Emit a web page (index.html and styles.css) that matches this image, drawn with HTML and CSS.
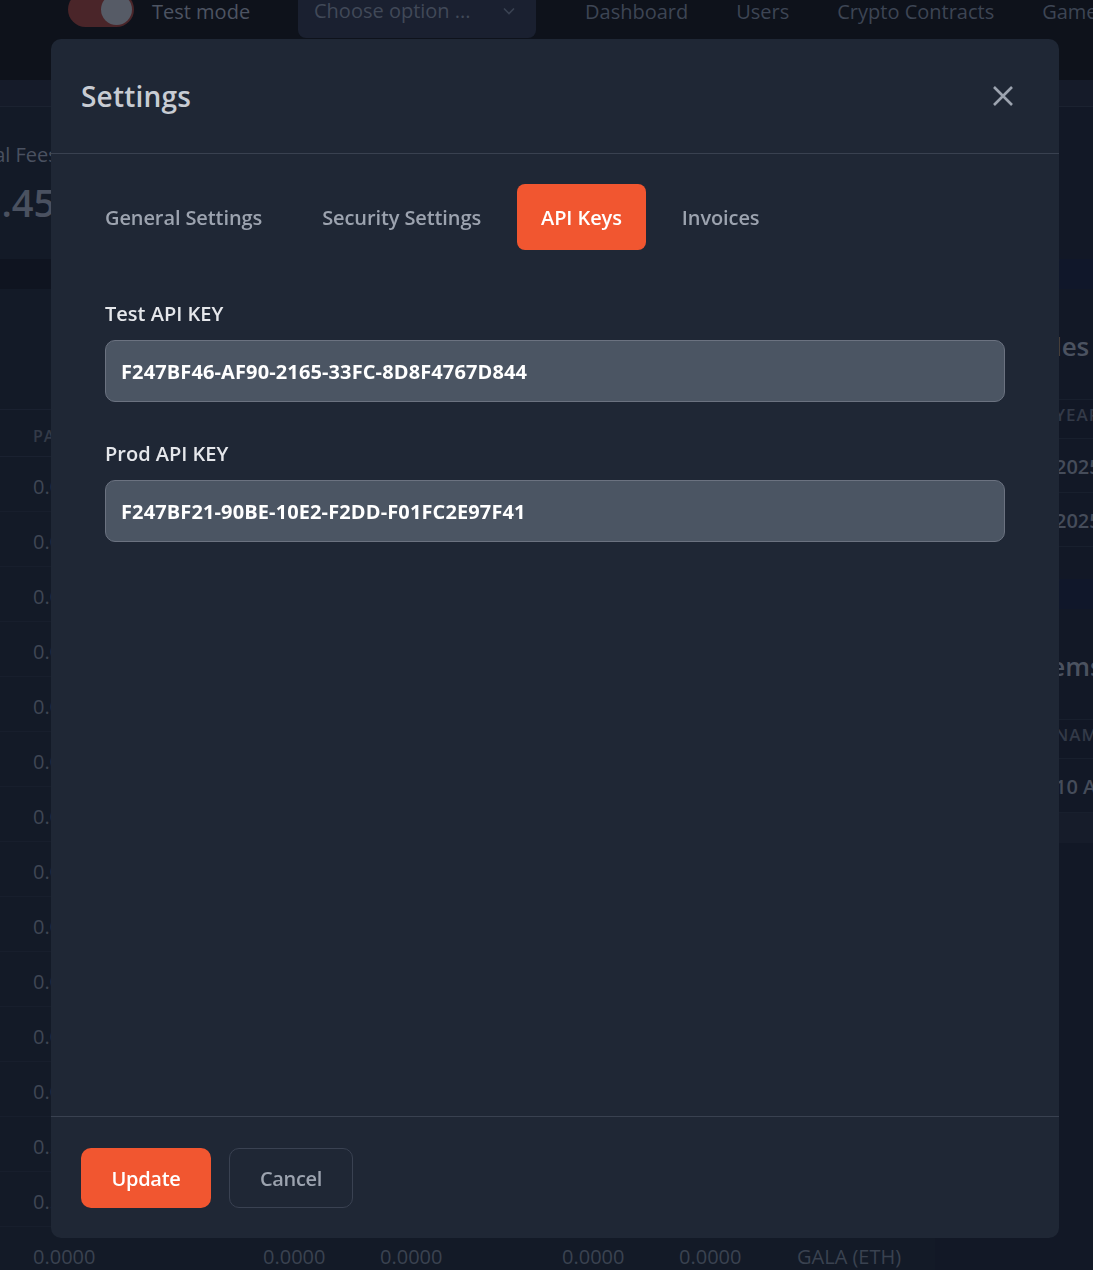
FILE: index.html
```html
<!DOCTYPE html>
<html lang="en">
<head>
<meta charset="utf-8">
<title>Settings</title>
<link rel="stylesheet" href="styles.css">
</head>
<body>
<div class="page">
  <header class="nav">
    <div class="nav-left">
      <span class="toggle"><span class="knob"></span></span>
      <span class="nav-text">Test mode</span>
      <div class="select">
        <span>Choose option ...</span>
        <svg width="14" height="14" viewBox="0 0 14 14"><path d="M2 4.5 7 9.5 12 4.5" fill="none" stroke="#3a4252" stroke-width="1.6"/></svg>
      </div>
    </div>
    <nav class="links">
      <span>Dashboard</span><span>Users</span><span>Crypto Contracts</span><span>Games</span>
    </nav>
  </header>
  <div class="subbar"></div>
  <main class="main">
    <section class="left">
      <div class="stats">
        <div class="stat-label">Total Fees</div>
        <div class="stat-value">$5.45</div>
      </div>
      <div class="band"></div>
      <div class="table">
        <div class="thead">PAIR</div>
        <div class="row">0.0000</div><div class="row">0.0000</div><div class="row">0.0000</div>
        <div class="row">0.0000</div><div class="row">0.0000</div><div class="row">0.0000</div>
        <div class="row">0.0000</div><div class="row">0.0000</div><div class="row">0.0000</div>
        <div class="row">0.0000</div><div class="row">0.0000</div><div class="row">0.0000</div>
        <div class="row">0.5000</div><div class="row">0.5000</div>
        <div class="row last">
          <span class="c1">0.0000</span><span class="c2">0.0000</span><span class="c3">0.0000</span>
          <span class="c4">0.0000</span><span class="c5">0.0000</span><span class="c6">GALA (ETH)</span>
        </div>
      </div>
    </section>
    <aside class="right">
      <div class="banner"></div>
      <div class="card-title t1">Sales</div>
      <div class="r-head">YEAR</div>
      <div class="r-row">2025</div>
      <div class="r-row">2025</div>
      <div class="banner b2"></div>
      <div class="card-title t2">Items</div>
      <div class="r-head">NAME</div>
      <div class="r-row">10 AXS</div>
      <div class="r-band"></div>
    </aside>
  </main>
</div>

<div class="backdrop">
  <div class="modal">
    <div class="modal-header">
      <h2>Settings</h2>
      <button class="close" aria-label="Close">
        <svg width="22" height="22" viewBox="0 0 22 22"><path d="M2 2 20 20M20 2 2 20" stroke="#9ca3af" stroke-width="2.6" stroke-linecap="butt"/></svg>
      </button>
    </div>
    <div class="modal-body">
      <div class="tabs">
        <button class="tab">General Settings</button>
        <button class="tab">Security Settings</button>
        <button class="tab active">API Keys</button>
        <button class="tab">Invoices</button>
      </div>
      <div class="form">
        <label class="field">
          <span class="label">Test API KEY</span>
          <input class="input" type="text" value="F247BF46-AF90-2165-33FC-8D8F4767D844" readonly>
        </label>
        <label class="field">
          <span class="label">Prod API KEY</span>
          <input class="input" type="text" value="F247BF21-90BE-10E2-F2DD-F01FC2E97F41" readonly>
        </label>
      </div>
    </div>
    <div class="modal-footer">
      <button class="btn primary">Update</button>
      <button class="btn ghost">Cancel</button>
    </div>
  </div>
</div>
</body>
</html>
```

FILE: styles.css
```css
* { box-sizing: border-box; }
html, body { margin: 0; padding: 0; }
body {
  width: 1093px;
  height: 1270px;
  overflow: hidden;
  background: #131926;
  font-family: "Open Sans", "Noto Sans", sans-serif;
  color: #e5e7eb;
}
button, input { font-family: inherit; }

/* ---------- background page (dimmed) ---------- */
.page { width: 1093px; }
.nav {
  height: 80px;
  background: #0e121b;
  display: flex;
  align-items: flex-start;
  padding-left: 68px;
  white-space: nowrap;
}
.nav-left { display: flex; align-items: flex-start; }
.toggle {
  margin-top: -8px;
  width: 66px;
  height: 35px;
  border-radius: 18px;
  background: #4a2529;
  display: flex;
  justify-content: flex-end;
  align-items: center;
  padding-right: 2px;
}
.knob { width: 31px; height: 31px; border-radius: 50%; background: #565b66; }
.nav-text { margin-left: 18px; width: 98px; font-size: 20px; color: #4d5462; line-height: 24px; }
.select {
  margin-left: 48px;
  margin-top: -4px;
  width: 238px;
  height: 42px;
  background: #1a2030;
  border-radius: 0 0 8px 8px;
  display: flex;
  align-items: flex-start;
  justify-content: space-between;
  padding: 2px 20px 0 16px;
  font-size: 20px;
  color: #414958;
  line-height: 26px;
}
.select svg { margin-top: 6px; }
.links {
  display: flex;
  gap: 48px;
  margin-left: 49px;
  font-size: 20px;
  color: #3d4554;
  line-height: 24px;
}
.subbar { height: 27px; background: #151b29; border-bottom: 1px solid #1b2230; }
.main { display: grid; grid-template-columns: 935px 1fr; }
.left { background: #131a27; }
.stats { padding: 34px 0 0 0; height: 152px; margin-left: -36px; white-space: nowrap; }
.stat-label { font-size: 20px; color: #4a5160; line-height: 28px; }
.stat-value { font-size: 38px; font-weight: 600; color: #4a5160; line-height: 46px; margin-left: -6px; margin-top: 10px; }
.band { height: 30px; background: #0f1420; }
.table { margin-top: 120px; }
.thead {
  height: 48px; line-height: 52px; padding-left: 33px;
  font-size: 16px; font-weight: 600; color: #333a48; letter-spacing: 1px;
  border-top: 1px solid #1a2130; border-bottom: 1px solid #1a2130;
}
.row {
  height: 55px; line-height: 60px; padding-left: 33px;
  font-size: 20px; color: #3f4654;
  border-bottom: 1px solid #171e2c;
}
.row.last { display: flex; border-bottom: 0; line-height: 60px; white-space: nowrap; }
.row.last span { color: #3a4250; }
.c1 { width: 230px; } .c2 { width: 117px; } .c3 { width: 182px; } .c4 { width: 117px; } .c5 { width: 118px; }
.right { background: #121826; padding-top: 152px; font-size: 20px; color: #454c5a; white-space: nowrap; }
.banner { height: 30px; background: linear-gradient(110deg, #10172a 40%, #2c3656 52%, #10172a 64%); }
.b2 { margin-top: 32px; }
.card-title { font-size: 26px; font-weight: 600; height: 110px; line-height: 114px; color: #4b5260; }
.t1 { padding-left: 90px; }
.t2 { padding-left: 97px; }
.r-head {
  height: 40px; line-height: 30px; padding-left: 120px;
  font-size: 17px; font-weight: 600; letter-spacing: 1px; color: #333a48;
  background: #111725; border-top: 1px solid #181f2d; border-bottom: 1px solid #181f2d;
}
.r-row { height: 54px; line-height: 56px; padding-left: 120px; border-bottom: 1px solid #181f2d; font-weight: 600; }
.r-band { height: 30px; background: #161c2a; }

/* ---------- modal ---------- */
.backdrop {
  position: fixed;
  inset: 0;
  padding: 39px 34px 32px 51px;
}
.modal {
  width: 1008px;
  height: 1199px;
  background: #1f2735;
  border-radius: 10px;
  display: flex;
  flex-direction: column;
}
.modal-header {
  height: 115px;
  border-bottom: 1px solid #394150;
  display: flex;
  align-items: center;
  justify-content: space-between;
  padding: 0 45px 0 30px;
}
.modal-header h2 {
  margin: 0;
  font-size: 28px;
  font-weight: 600;
  color: #c8ccd3;
  letter-spacing: 0.2px;
}
.close { background: none; border: 0; padding: 0; width: 22px; height: 22px; display: flex; cursor: pointer; }
.modal-body { flex: 1; padding: 30px 54px 0 30px; }
.tabs { display: flex; gap: 12px; }
.tab {
  height: 66px;
  padding: 0 24px;
  border: 0;
  border-radius: 8px;
  background: transparent;
  color: #9ca3af;
  font-size: 20px;
  font-weight: 600;
  letter-spacing: -0.1px;
  cursor: pointer;
}
.tab.active { background: #f15630; color: #fff; }
.form { padding: 50px 0 0 24px; display: flex; flex-direction: column; gap: 38px; }
.field { display: flex; flex-direction: column; gap: 12px; }
.label { font-size: 20px; font-weight: 600; color: #e5e7eb; line-height: 28px; }
.input {
  height: 62px;
  width: 900px;
  background: #4b5563;
  border: 1px solid #6b7280;
  border-radius: 10px;
  padding: 0 15px;
  font-size: 20px;
  font-weight: 700;
  letter-spacing: 0.12px;
  color: #fff;
  outline: none;
}
.modal-footer {
  border-top: 1px solid #394150;
  padding: 31px 30px 30px 30px;
  display: flex;
  gap: 18px;
}
.btn {
  height: 60px;
  border-radius: 10px;
  font-size: 20px;
  font-weight: 600;
  cursor: pointer;
  letter-spacing: -0.3px;
}
.btn.primary { width: 130px; background: #f15630; color: #fff; border: 0; }
.btn.ghost { width: 124px; background: transparent; border: 1px solid #3a4252; color: #9ca3af; }
```
